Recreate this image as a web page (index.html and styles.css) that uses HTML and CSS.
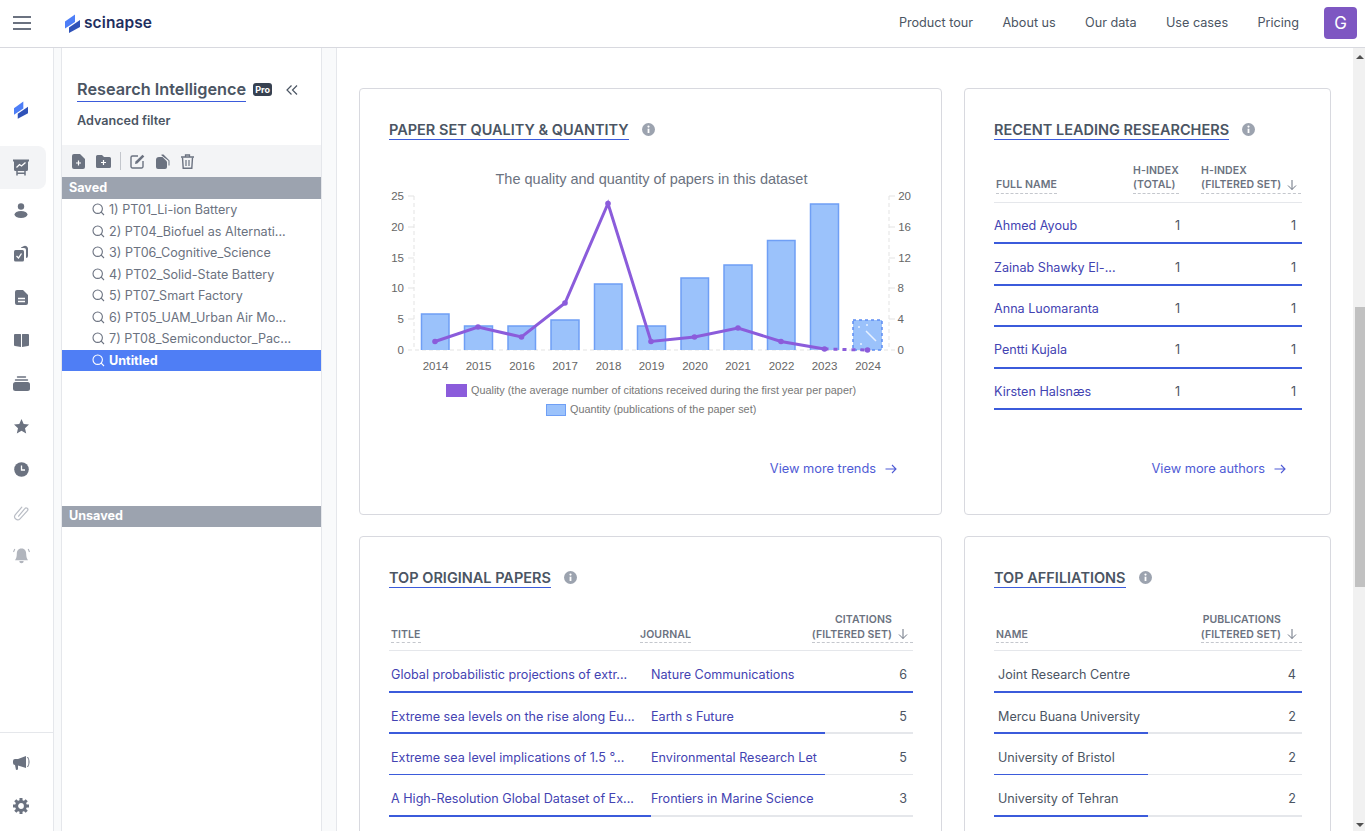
FILE: index.html
```html
<!DOCTYPE html>
<html lang="en">
<head>
<meta charset="utf-8">
<title>Scinapse Research Intelligence</title>
<link rel="stylesheet" href="styles.css">
</head>
<body>
<header class="topbar">
  <button class="burger" aria-label="Menu"><span></span><span></span><span></span></button>
  <a class="brand">
    <svg width="15" height="19" viewBox="0 0 15 19"><path d="M0 7.500 10 .5V8L0 14.500Z" fill="#4d7ef7"/><path d="M4 13.500 15 6V13L4 19Z" fill="#2f52b8"/></svg>
    <span>scinapse</span>
  </a>
  <nav class="topnav">
    <a>Product tour</a><a>About us</a><a>Our data</a><a>Use cases</a><a>Pricing</a>
  </nav>
  <div class="avatar">G</div>
</header>

<div class="shell">
  <aside class="rail">
    <div class="rail-main">
      <div class="rail-logo"><svg width="14" height="18" viewBox="0 0 15 19"><path d="M0 7.500 10 .5V8L0 14.500Z" fill="#4d7ef7"/><path d="M4 13.500 15 6V13L4 19Z" fill="#2f52b8"/></svg></div>
      <div class="rail-item active"><svg width="16" height="17" viewBox="0 0 16 17"><path d="M0 .5H16V2.500H15V10.500a1.500 1.500 0 0 1-1.500 1.500H2.500A1.500 1.500 0 0 1 1 10.500V2.500H0Z" fill="#6b7280"/><path d="M3.500 8.500 6.500 5.500 8.500 7 12.500 3.500" stroke="#fff" stroke-width="1.300" fill="none"/><path d="M4 12V16.500M12 12V16.500M4 14.300H12" stroke="#6b7280" stroke-width="1.500" fill="none"/></svg></div>
      <div class="rail-item"><svg width="14" height="15" viewBox="0 0 14 15"><circle cx="7" cy="3.500" r="3.200" fill="#6b7280"/><ellipse cx="7" cy="11.500" rx="6.500" ry="3.500" fill="#6b7280"/></svg></div>
      <div class="rail-item"><svg width="16" height="17" viewBox="0 0 16 17"><path d="M8 2.500 11 1a3 3 0 0 1 4 2.500V11a2 2 0 0 1-2 2V5a2 2 0 0 0-2-2H8Z" fill="#6b7280"/><rect x="1" y="5" width="10" height="11.500" rx="1.500" fill="#6b7280"/><path d="M3.500 11 5.500 13 8.500 8.500" stroke="#fff" stroke-width="1.300" fill="none"/></svg></div>
      <div class="rail-item"><svg width="13" height="15" viewBox="0 0 13 15"><path d="M2 0H8L13 5V13a2 2 0 0 1-2 2H2a2 2 0 0 1-2-2V2a2 2 0 0 1 2-2Z" fill="#6b7280"/><path d="M3 8.500H10M3 11.500H10" stroke="#fff" stroke-width="1.300"/></svg></div>
      <div class="rail-item"><svg width="15" height="13" viewBox="0 0 15 13"><path d="M1 0H6.500A.8.800 0 0 1 7 .8V13L1 12A1 1 0 0 1 0 11V1A1 1 0 0 1 1 0Z" fill="#6b7280"/><path d="M14 0H8.500A.8.800 0 0 0 8 .8V13L14 12A1 1 0 0 0 15 11V1A1 1 0 0 0 14 0Z" fill="#6b7280"/></svg></div>
      <div class="rail-item"><svg width="17" height="15" viewBox="0 0 17 15"><rect x="0" y="6" width="17" height="9" rx="2.500" fill="#6b7280"/><path d="M2.500 4H14.500M4.500 1H12.500" stroke="#6b7280" stroke-width="1.400" stroke-linecap="round"/></svg></div>
      <div class="rail-item"><svg width="15" height="15" viewBox="0 0 15 15"><path d="M7.500 0 9.700 5 15 5.600 11 9.200 12.200 14.600 7.500 11.800 2.800 14.600 4 9.200 0 5.600 5.300 5Z" fill="#6b7280"/></svg></div>
      <div class="rail-item"><svg width="15" height="15" viewBox="0 0 15 15"><circle cx="7.500" cy="7.500" r="7.300" fill="#6b7280"/><path d="M7.500 3.500V8H11" stroke="#fff" stroke-width="1.300" fill="none"/></svg></div>
      <div class="rail-item"><svg width="16" height="16" viewBox="0 0 16 16"><path d="M5.600 11.200 11.800 3.600a1.700 1.700 0 0 1 2.700 2.100L7 13.800a3.100 3.100 0 0 1-4.800-3.900L8.800 2.200" stroke="#b9bdc5" stroke-width="1.200" fill="none" stroke-linecap="round"/></svg></div>
      <div class="rail-item"><svg width="17" height="16" viewBox="0 0 17 16"><path d="M8.500 .5C5 .5 3.800 3 3.800 6 3.800 9 3 10.700 2 12.200H15C14 10.700 13.200 9 13.200 6 13.200 3 12 .5 8.500 .5Z" fill="#b1b5bd"/><path d="M6.300 13a2.200 2.200 0 0 0 4.400 0Z" fill="#b1b5bd"/><path d="M.5 4 1.800 1M16.500 4 15.200 1" stroke="#b1b5bd" stroke-width="1.100" fill="none"/></svg></div>
    </div>
    <div class="rail-foot">
      <div class="rail-item"><svg width="17" height="15" viewBox="0 0 17 15"><path d="M0 5a2 2 0 0 1 2-2H5L13 0V12L5 9.500V13.500L3 14 2 9H2A2 2 0 0 1 0 7Z" fill="#6b7280"/><path d="M14.500 1C16.500 4 16.500 8 14.500 11" stroke="#6b7280" stroke-width="1" fill="none"/></svg></div>
      <div class="rail-item"><svg width="16" height="16" viewBox="0 0 16 16"><circle cx="8" cy="8" r="4.400" fill="none" stroke="#6b7280" stroke-width="3"/><path d="M8 0V3M8 13V16M0 8H3M13 8H16M2.300 2.300 4.400 4.400M11.600 11.600 13.700 13.700M2.300 13.700 4.400 11.600M11.600 4.400 13.700 2.300" stroke="#6b7280" stroke-width="3"/></svg></div>
    </div>
  </aside>

  <aside class="panel">
    <div class="panel-head">
      <h2 class="panel-title">Research Intelligence</h2>
      <span class="pro">Pro</span>
      <svg class="collapse" width="12" height="10" viewBox="0 0 12 10"><path d="M5.500 .5 1 5 5.500 9.500M11 .5 6.500 5 11 9.500" stroke="#4b5563" stroke-width="1.200" fill="none"/></svg>
    </div>
    <div class="panel-sub">Advanced filter</div>
    <div class="toolbar">
      <svg width="13" height="15" viewBox="0 0 13 15"><path d="M2 0H8L13 5V13a2 2 0 0 1-2 2H2a2 2 0 0 1-2-2V2a2 2 0 0 1 2-2Z" fill="#6b7280"/><path d="M4 9H9M6.500 6.500V11.500" stroke="#fff" stroke-width="1.200"/></svg>
      <svg width="15" height="13" viewBox="0 0 15 13"><path d="M1.500 0H6L8 2H13.500A1.500 1.500 0 0 1 15 3.500V11.500A1.500 1.500 0 0 1 13.500 13H1.500A1.500 1.500 0 0 1 0 11.500V1.500A1.500 1.500 0 0 1 1.500 0Z" fill="#6b7280"/><path d="M5 7.500H10M7.500 5V10" stroke="#fff" stroke-width="1.200"/></svg>
      <span class="tool-sep"></span>
      <svg width="15" height="15" viewBox="0 0 15 15"><path d="M8 2H2.500A1.500 1.500 0 0 0 1 3.500V12.500A1.500 1.500 0 0 0 2.500 14H11.500A1.500 1.500 0 0 0 13 12.500V7" stroke="#6b7280" stroke-width="1.400" fill="none"/><path d="M5.500 7.500 12.500 .8 14.300 2.600 7.300 9.500 5 10Z" fill="#6b7280"/></svg>
      <svg width="14" height="15" viewBox="0 0 14 15"><path d="M3 3H6.500L11 7.500V13a2 2 0 0 1-2 2H2a2 2 0 0 1-2-2V6a3 3 0 0 1 3-3Z" fill="#6b7280"/><path d="M5.500 .5H7.500L13.500 6.500V11.500H12.500V6.800L5.500 1.500Z" fill="#6b7280"/></svg>
      <svg width="13" height="15" viewBox="0 0 13 15"><path d="M0 3H13M4.500 3V1H8.500V3" stroke="#6b7280" stroke-width="1.300" fill="none"/><path d="M1.500 3.500 2.200 14.300H10.800L11.500 3.500" stroke="#6b7280" stroke-width="1.400" fill="none"/><path d="M5 6V12M8 6V12" stroke="#6b7280" stroke-width="1.200"/></svg>
    </div>
    <div class="group-bar">Saved</div>
    <ul class="query-list">
      <li><svg class="q" width="13" height="13" viewBox="0 0 13 13"><circle cx="5.700" cy="5.700" r="4.700" fill="none" stroke="currentColor" stroke-width="1.100"/><path d="M9.200 9.200 12 12" stroke="currentColor" stroke-width="1.100"/></svg>1) PT01_Li-ion Battery</li>
      <li><svg class="q" width="13" height="13" viewBox="0 0 13 13"><circle cx="5.700" cy="5.700" r="4.700" fill="none" stroke="currentColor" stroke-width="1.100"/><path d="M9.200 9.200 12 12" stroke="currentColor" stroke-width="1.100"/></svg>2) PT04_Biofuel as Alternati...</li>
      <li><svg class="q" width="13" height="13" viewBox="0 0 13 13"><circle cx="5.700" cy="5.700" r="4.700" fill="none" stroke="currentColor" stroke-width="1.100"/><path d="M9.200 9.200 12 12" stroke="currentColor" stroke-width="1.100"/></svg>3) PT06_Cognitive_Science</li>
      <li><svg class="q" width="13" height="13" viewBox="0 0 13 13"><circle cx="5.700" cy="5.700" r="4.700" fill="none" stroke="currentColor" stroke-width="1.100"/><path d="M9.200 9.200 12 12" stroke="currentColor" stroke-width="1.100"/></svg>4) PT02_Solid-State Battery</li>
      <li><svg class="q" width="13" height="13" viewBox="0 0 13 13"><circle cx="5.700" cy="5.700" r="4.700" fill="none" stroke="currentColor" stroke-width="1.100"/><path d="M9.200 9.200 12 12" stroke="currentColor" stroke-width="1.100"/></svg>5) PT07_Smart Factory</li>
      <li><svg class="q" width="13" height="13" viewBox="0 0 13 13"><circle cx="5.700" cy="5.700" r="4.700" fill="none" stroke="currentColor" stroke-width="1.100"/><path d="M9.200 9.200 12 12" stroke="currentColor" stroke-width="1.100"/></svg>6) PT05_UAM_Urban Air Mo...</li>
      <li><svg class="q" width="13" height="13" viewBox="0 0 13 13"><circle cx="5.700" cy="5.700" r="4.700" fill="none" stroke="currentColor" stroke-width="1.100"/><path d="M9.200 9.200 12 12" stroke="currentColor" stroke-width="1.100"/></svg>7) PT08_Semiconductor_Pac...</li>
      <li class="selected"><svg class="q" width="13" height="13" viewBox="0 0 13 13"><circle cx="5.700" cy="5.700" r="4.700" fill="none" stroke="currentColor" stroke-width="1.100"/><path d="M9.200 9.200 12 12" stroke="currentColor" stroke-width="1.100"/></svg>Untitled</li>
    </ul>
    <div class="group-bar unsaved">Unsaved</div>
  </aside>

  <main class="content">
    <div class="cards">
      <section class="card">
        <div class="card-head"><h3>Paper set quality &amp; quantity</h3><svg class="info" width="13" height="13" viewBox="0 0 13 13"><circle cx="6.500" cy="6.500" r="6.500" fill="#9ca3af"/><circle cx="6.500" cy="3.600" r="1.100" fill="#fff"/><path d="M6.500 5.700V10" stroke="#fff" stroke-width="1.800"/></svg></div>
        <svg class="chart" width="523" height="270" viewBox="389 155 523 270">
          <text x="651.500" y="184" class="c-title" text-anchor="middle">The quality and quantity of papers in this dataset</text>
          <g stroke="#e3e3e3" stroke-dasharray="4 3" fill="none">
            <path d="M414 196V350M889 196V350"/>
            <path d="M408 350H895"/>
          </g>
          <g stroke="#e3e3e3" fill="none">
            <path d="M408 196H414M408 227H414M408 258H414M408 288H414M408 319H414M889 196H895M889 227H895M889 258H895M889 288H895M889 319H895"/>
          </g>
          <g class="c-axis" text-anchor="end">
            <text x="404" y="200">25</text><text x="404" y="231">20</text><text x="404" y="262">15</text><text x="404" y="292">10</text><text x="404" y="323">5</text><text x="404" y="354">0</text>
          </g>
          <g class="c-axis" text-anchor="end">
            <text x="911" y="200">20</text><text x="911" y="231">16</text><text x="911" y="262">12</text><text x="904" y="292">8</text><text x="904" y="323">4</text><text x="904" y="354">0</text>
          </g>
          <g fill="#9bc2fb" stroke="#6f9ff5" stroke-width="1.500">
            <path d="M421.500 350V314H449V350"/>
            <path d="M464.500 350V326H492.500V350"/>
            <path d="M508 350V326H535.500V350"/>
            <path d="M551 350V320H579V350"/>
            <path d="M594.500 350V284H622V350"/>
            <path d="M637.500 350V326H665.500V350"/>
            <path d="M681 350V278H708.500V350"/>
            <path d="M724 350V265H752V350"/>
            <path d="M767.500 350V240.500H795V350"/>
            <path d="M810.500 350V204H838.500V350"/>
          </g>
          <rect x="853" y="320" width="29" height="30" fill="#9bc2fb" stroke="#5d8df3" stroke-width="1.500" stroke-dasharray="3 3"/>
          <path d="M858 327H860M866 325H868M866 331 876 341M860 344H862" stroke="#e8f1ff" stroke-width="1.500" fill="none"/>
          <path d="M435 341.500 478 327 521.500 337 565 303 608 203.500 651 341.500 694.500 337 738 328 781 341.500 824.500 349" stroke="#8b5cdb" stroke-width="3" fill="none"/>
          <path d="M824.500 349 867.500 350" stroke="#8b5cdb" stroke-width="3" stroke-dasharray="4 5" fill="none"/>
          <g fill="#8b5cdb">
            <circle cx="435" cy="341.500" r="2.800"/><circle cx="478" cy="327" r="2.800"/><circle cx="521.500" cy="337" r="2.800"/><circle cx="565" cy="303" r="2.800"/><circle cx="608" cy="203.500" r="2.800"/><circle cx="651" cy="341.500" r="2.800"/><circle cx="694.500" cy="337" r="2.800"/><circle cx="738" cy="328" r="2.800"/><circle cx="781" cy="341.500" r="2.800"/><circle cx="824.500" cy="349" r="2.800"/><circle cx="867.500" cy="350" r="2.800"/>
          </g>
          <g class="c-axis" text-anchor="middle">
            <text x="435.500" y="370">2014</text><text x="478.500" y="370">2015</text><text x="522" y="370">2016</text><text x="565" y="370">2017</text><text x="608.500" y="370">2018</text><text x="651.500" y="370">2019</text><text x="695" y="370">2020</text><text x="738" y="370">2021</text><text x="781.500" y="370">2022</text><text x="824.500" y="370">2023</text><text x="868" y="370">2024</text>
          </g>
          <rect x="446" y="384" width="21" height="13" fill="#8b5cdb"/>
          <text x="471" y="394" class="c-legend">Quality (the average number of citations received during the first year per paper)</text>
          <rect x="546.500" y="404.500" width="19" height="11" fill="#9bc2fb" stroke="#6f9ff5"/>
          <text x="570" y="413" class="c-legend">Quantity (publications of the paper set)</text>
        </svg>
        <a class="more">View more trends<svg width="12" height="10" viewBox="0 0 12 10"><path d="M.5 5H11M7 1 11 5 7 9" stroke="currentColor" stroke-width="1.100" fill="none"/></svg></a>
      </section>

      <section class="card">
        <div class="card-head"><h3>Recent leading researchers</h3><svg class="info" width="13" height="13" viewBox="0 0 13 13"><circle cx="6.500" cy="6.500" r="6.500" fill="#9ca3af"/><circle cx="6.500" cy="3.600" r="1.100" fill="#fff"/><path d="M6.500 5.700V10" stroke="#fff" stroke-width="1.800"/></svg></div>
        <div class="thead researchers">
          <span class="th first">Full name</span>
          <span class="th">H-index<br>(total)</span>
          <span class="th">H-index<br>(filtered set)<svg class="sort" width="10" height="10" viewBox="0 0 10 10"><path d="M5 0V9.500M1 5.500 5 9.500 9 5.500" stroke="#6b7280" stroke-width="1" fill="none"/></svg></span>
        </div>
        <div class="row researchers"><a class="name">Ahmed Ayoub</a><span class="num mid">1</span><span class="num">1</span><i class="bar"><b style="width:100%"></b></i></div>
        <div class="row researchers"><a class="name">Zainab Shawky El-...</a><span class="num mid">1</span><span class="num">1</span><i class="bar"><b style="width:100%"></b></i></div>
        <div class="row researchers"><a class="name">Anna Luomaranta</a><span class="num mid">1</span><span class="num">1</span><i class="bar"><b style="width:100%"></b></i></div>
        <div class="row researchers"><a class="name">Pentti Kujala</a><span class="num mid">1</span><span class="num">1</span><i class="bar"><b style="width:100%"></b></i></div>
        <div class="row researchers"><a class="name">Kirsten Halsnæs</a><span class="num mid">1</span><span class="num">1</span><i class="bar"><b style="width:100%"></b></i></div>
        <a class="more">View more authors<svg width="12" height="10" viewBox="0 0 12 10"><path d="M.5 5H11M7 1 11 5 7 9" stroke="currentColor" stroke-width="1.100" fill="none"/></svg></a>
      </section>

      <section class="card">
        <div class="card-head"><h3>Top original papers</h3><svg class="info" width="13" height="13" viewBox="0 0 13 13"><circle cx="6.500" cy="6.500" r="6.500" fill="#9ca3af"/><circle cx="6.500" cy="3.600" r="1.100" fill="#fff"/><path d="M6.500 5.700V10" stroke="#fff" stroke-width="1.800"/></svg></div>
        <div class="thead papers">
          <span class="th first">Title</span>
          <span class="th">Journal</span>
          <span class="th right">Citations<br>(filtered set)<svg class="sort" width="10" height="10" viewBox="0 0 10 10"><path d="M5 0V9.500M1 5.500 5 9.500 9 5.500" stroke="#6b7280" stroke-width="1" fill="none"/></svg></span>
        </div>
        <div class="row papers"><a class="name in">Global probabilistic projections of extr...</a><a class="name">Nature Communications</a><span class="num">6</span><i class="bar"><b style="width:100%"></b></i></div>
        <div class="row papers"><a class="name in">Extreme sea levels on the rise along Eu...</a><a class="name">Earth s Future</a><span class="num">5</span><i class="bar"><b style="width:83.300%"></b></i></div>
        <div class="row papers"><a class="name in">Extreme sea level implications of 1.5 °...</a><a class="name">Environmental Research Let</a><span class="num">5</span><i class="bar"><b style="width:83.300%"></b></i></div>
        <div class="row papers"><a class="name in">A High-Resolution Global Dataset of Ex...</a><a class="name">Frontiers in Marine Science</a><span class="num">3</span><i class="bar"><b style="width:50%"></b></i></div>
      </section>

      <section class="card">
        <div class="card-head"><h3>Top affiliations</h3><svg class="info" width="13" height="13" viewBox="0 0 13 13"><circle cx="6.500" cy="6.500" r="6.500" fill="#9ca3af"/><circle cx="6.500" cy="3.600" r="1.100" fill="#fff"/><path d="M6.500 5.700V10" stroke="#fff" stroke-width="1.800"/></svg></div>
        <div class="thead affiliations">
          <span class="th first">Name</span>
          <span class="th right">Publications<br>(filtered set)<svg class="sort" width="10" height="10" viewBox="0 0 10 10"><path d="M5 0V9.500M1 5.500 5 9.500 9 5.500" stroke="#6b7280" stroke-width="1" fill="none"/></svg></span>
        </div>
        <div class="row affiliations"><span class="org">Joint Research Centre</span><span class="num">4</span><i class="bar"><b style="width:100%"></b></i></div>
        <div class="row affiliations"><span class="org">Mercu Buana University</span><span class="num">2</span><i class="bar"><b style="width:50%"></b></i></div>
        <div class="row affiliations"><span class="org">University of Bristol</span><span class="num">2</span><i class="bar"><b style="width:50%"></b></i></div>
        <div class="row affiliations"><span class="org">University of Tehran</span><span class="num">2</span><i class="bar"><b style="width:50%"></b></i></div>
      </section>
    </div>
  </main>

  <div class="scrollbar">
    <span class="arrow up"></span>
    <div class="track"><div class="thumb"></div></div>
    <span class="arrow down"></span>
  </div>
</div>
</body>
</html>
```
FILE: styles.css
```css
* { box-sizing: border-box; }
html, body { margin: 0; height: 100%; overflow: hidden; }
body { font-family: Inter, "Noto Sans", sans-serif; color: #4b5563; background: #fff; font-size: 13px; }
h2, h3, ul { margin: 0; padding: 0; }
a { cursor: pointer; }

.topbar { height: 48px; border-bottom: 1px solid #d8d9df; display: flex; align-items: center; padding: 0 8px 1px 13px; background: #fff; }
.burger { width: 18px; height: 14px; padding: 0; border: 0; background: none; display: flex; flex-direction: column; justify-content: space-between; margin-right: 34px; }
.burger span { display: block; height: 2px; background: #6b7280; }
.brand { display: flex; align-items: center; gap: 4px; }
.brand svg { display: block; }
.brand span { font-size: 15.500px; font-weight: 600; color: #1f2f5f; letter-spacing: .1px; margin-bottom: 2px; }
.topnav { margin-left: auto; display: flex; gap: 29.300px; margin-bottom: 2px; }
.topnav a { color: #4b5563; font-size: 12.650px; }
.avatar { margin-left: 25px; width: 33px; height: 32px; border-radius: 4px; background: #7e57c2; color: #fff; font-size: 17px; display: flex; align-items: center; justify-content: center; }

.shell { display: flex; height: 783px; background: #f9fafb; }
.rail { width: 54px; flex: none; background: #fff; border-right: 1px solid #e5e7eb; display: flex; flex-direction: column; justify-content: space-between; }
.rail-main { padding-top: 40px; display: flex; flex-direction: column; }
.rail-logo { height: 43px; width: 42px; display: flex; align-items: center; justify-content: center; margin-bottom: 15px; }
.rail-item { height: 43.200px; width: 42px; display: flex; align-items: center; justify-content: center; }
.rail-item.active { width: 46px; padding-right: 4px; background: #f3f4f6; border-radius: 0 8px 8px 0; }
.rail-foot { border-top: 1px solid #e5e7eb; padding: 9px 0 4px; display: flex; flex-direction: column; height: 99px; }
.rail-foot .rail-item { height: 42.500px; }

.panel { width: 261px; flex: none; margin-left: 7px; background: #fff; border-left: 1px solid #e5e7eb; border-right: 1px solid #e5e7eb; }
.panel-head { display: flex; align-items: center; padding: 29px 0 0 15px; }
.panel-title { font-size: 16.300px; font-weight: 600; color: #4b5563; line-height: 24px; border-bottom: 1px solid #3b5bdb; white-space: nowrap; }
.pro { margin-left: 7px; background: #374151; color: #fff; font-size: 9px; font-weight: 700; padding: 1px 2px; border-radius: 3px; line-height: 11px; }
.collapse { margin-left: 14px; }
.panel-sub { padding: 11px 0 0 15px; font-size: 12.600px; font-weight: 600; color: #4b5563; line-height: 16px; height: 43px; }
.toolbar { height: 32px; background: #f3f4f6; display: flex; align-items: center; padding-left: 10px; gap: 11px; }
.tool-sep { width: 1px; height: 18px; background: #c3c6cc; margin: 0 -2px; }
.group-bar { height: 22px; background: #9ca3af; color: #fff; font-weight: 700; font-size: 12.600px; line-height: 21px; padding-left: 7px; }
.query-list { list-style: none; height: 307px; }
.query-list li { height: 21.500px; display: flex; align-items: center; gap: 4px; padding-left: 30px; font-size: 12.600px; color: #6b7280; white-space: nowrap; }
.query-list li.selected { background: #4f7ef5; color: #fff; font-weight: 700; }
.group-bar.unsaved { height: 21px; line-height: 19px; }
.q { flex: none; color: #6b7280; }
.selected .q { color: #fff; }

.content { width: 1017px; flex: none; margin-left: 14px; background: #fff; border-left: 1px solid #e5e7eb; padding: 40px 22px 0; overflow: hidden; }
.cards { display: grid; grid-template-columns: 583px 367px; grid-template-rows: 427px 340px; column-gap: 22px; row-gap: 21px; }
.card { border: 1px solid #d8d9df; border-radius: 4px; padding: 0 28px 0 29px; background: #fff; display: flex; flex-direction: column; min-height: 0; }
.card-head { display: flex; align-items: center; gap: 13px; padding-top: 29px; height: 51px; flex: none; }
.card-head h3 { font-size: 14.500px; font-weight: 600; color: #4b5563; text-transform: uppercase; line-height: 19px; border-bottom: 1px solid #3b5bdb; margin-top: 1px; }
.info { flex: none; }
.chart { display: block; flex: none; margin-top: 15px; font-family: "Liberation Sans", Arial, sans-serif; }
.c-title { font-size: 14.500px; fill: #6b7280; }
.c-axis text { font-size: 11.500px; fill: #666; }
.c-legend { font-size: 10.850px; fill: #777; }
.more { align-self: flex-end; color: #4f5bd5; font-size: 12.800px; display: flex; align-items: center; gap: 9px; margin-top: auto; margin-bottom: 37px; margin-right: 16px; line-height: 16px; }

.thead { display: grid; align-items: end; margin-top: 24px; padding-bottom: 9px; border-bottom: 1px solid #e5e7eb; height: 39px; flex: none; }
.thead.papers, .thead.affiliations { margin-bottom: .15px; }
.th { font-size: 10.500px; font-weight: 600; color: #6b7280; text-transform: uppercase; line-height: 15px; border-bottom: 1px dashed #c4c7cd; justify-self: start; white-space: nowrap; position: relative; letter-spacing: .1px; }
.thead.researchers .th { line-height: 14px; padding-bottom: 1px; }
.th.first { margin-left: 2px; }
.th.right { text-align: right; justify-self: end; padding-right: 21px; }
.sort { position: absolute; right: 5px; bottom: 3px; }
.thead.researchers .sort { right: 4px; }
.thead.researchers .th:last-child { padding-right: 20px; }
.researchers { grid-template-columns: 139px 68px 1fr; }
.papers { grid-template-columns: 251px 1fr auto; }
.thead.affiliations { grid-template-columns: 1fr auto; }
.row.affiliations { grid-template-columns: 1fr auto; }

.row { display: grid; align-items: center; height: 41.400px; position: relative; flex: none; padding-top: 5.600px; font-size: 12.600px; }
.row.researchers { padding-top: 4px; }
.row .num { text-align: right; color: #4b5563; padding-right: 6px; }
.researchers .num.mid { padding-right: 0; text-align: right; width: 47px; }
.name { color: #4343b2; white-space: nowrap; overflow: hidden; }
.name.in { padding-left: 2px; }
.papers .name:not(.in) { padding-left: 11px; }
.org { color: #4b5563; padding-left: 4px; }
.bar { position: absolute; left: 0; right: 0; bottom: 0; height: 1.600px; background: #e5e7eb; display: block; }
.row.researchers .bar { height: 2px; }
.bar b { display: block; height: 100%; background: #3b5bdb; }

.scrollbar { width: 12px; flex: none; background: #f1f1f1; display: flex; flex-direction: column; align-items: center; padding-left: 2px; }
.arrow { width: 0; height: 0; flex: none; border-left: 4px solid transparent; border-right: 4px solid transparent; }
.arrow.up { border-bottom: 4px solid #505050; margin: 7px 0 4px; }
.arrow.down { border-top: 4px solid #505050; margin: 4px 0 4px; }
.track { flex: 1; width: 100%; padding-top: 244px; }
.thumb { height: 280px; background: #c1c1c1; }
```
